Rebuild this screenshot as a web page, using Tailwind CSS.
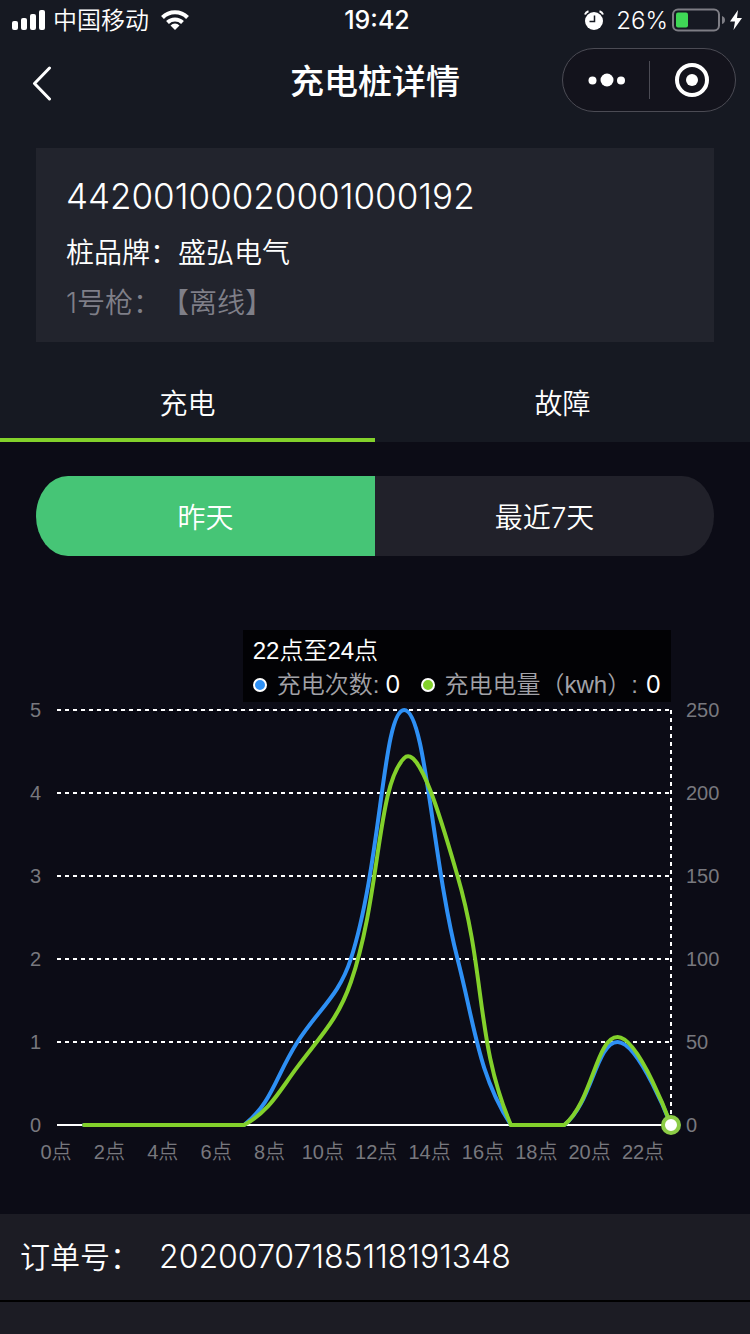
<!DOCTYPE html>
<html lang="zh-CN">
<head>
  <meta charset="UTF-8" />
  <meta name="viewport" content="width=device-width, initial-scale=1.0" />
  <title>充电桩详情</title>
  <script src="https://cdn.jsdelivr.net/npm/@tailwindcss/browser@4"></script>
</head>
<body class="min-h-screen flex flex-col bg-[#0c0c16] text-white font-[350] font-['Inter','Noto_Sans_CJK_SC',sans-serif]">
  <header class="bg-[#161922]">
    <!-- status bar -->
    <div class="grid grid-cols-3 items-center h-10 pl-3 pr-2 text-2xl">
      <div class="flex items-center gap-2">
        <svg class="w-[33px] h-5" viewBox="0 0 33 20" fill="#fff">
          <rect x="0" y="11" width="6" height="9" rx="2" />
          <rect x="9" y="8" width="6" height="12" rx="2" />
          <rect x="18" y="4" width="6" height="16" rx="2" />
          <rect x="27" y="0" width="6" height="20" rx="2" />
        </svg>
        <span class="pt-0.5">中国移动</span>
        <svg class="w-7 h-5 ml-1" viewBox="0 0 28 20" fill="none" stroke="#fff" stroke-width="4">
          <path d="M1.500 7.500a17.500 17.500 0 0 1 25 0" />
          <path d="M6.500 12.500a10.700 10.700 0 0 1 15 0" />
          <path d="M14 20l-4.500-4.600a6.500 6.500 0 0 1 9 0z" fill="#fff" stroke="none" />
        </svg>
      </div>
      <div class="pt-0.5 text-center text-[25px] font-medium">19:42</div>
      <div class="flex items-center justify-end">
        <svg class="w-5 h-5 mr-3" viewBox="0 0 20 20">
          <circle cx="10" cy="11" r="9" fill="#fff" />
          <path d="M1 4.500a5 5 0 0 1 3.500-3.300M19 4.500a5 5 0 0 0-3.500-3.300" fill="none" stroke="#fff" stroke-width="2" />
          <path d="M10.500 5.500v6h-5" fill="none" stroke="#161922" stroke-width="1.500" />
        </svg>
        <span class="pt-0.5">26%</span>
        <svg class="w-[54px] h-6 ml-1" viewBox="0 0 54 24">
          <rect x="1" y="1.500" width="46" height="21" rx="5" fill="none" stroke="#7d7d84" stroke-width="2" />
          <rect x="4" y="4.500" width="12" height="15" rx="2" fill="#3fd856" />
          <path d="M50 8q3 1 3 4t-3 4z" fill="#7d7d84" />
        </svg>
        <svg class="w-3 h-5 ml-1" viewBox="0 0 12 20" fill="#fff">
          <path d="M8 0L0 11.500h5L3.500 20 12 8H7z" />
        </svg>
      </div>
    </div>

    <!-- navigation bar -->
    <div class="grid grid-cols-[174px_1fr_174px] items-start px-3.5 pt-2 h-[108px]">
      <button class="w-14 h-16 pt-2 flex items-center justify-center" aria-label="返回">
        <svg class="w-5 h-9" viewBox="0 0 20 36" fill="none" stroke="#fff" stroke-width="3" stroke-linecap="round" stroke-linejoin="round">
          <path d="M17.500 2L2.500 17.500 17.500 33" />
        </svg>
      </button>
      <h1 class="pt-0.5 text-center text-[34px] leading-16 font-medium">充电桩详情</h1>
      <div class="flex items-center h-16 rounded-full border border-[#4b4b54] bg-[#13131c]">
        <button class="flex-1 flex justify-center" aria-label="更多">
          <svg class="w-[38px] h-4" viewBox="0 0 38 16" fill="#fff">
            <circle cx="5.500" cy="8.500" r="4" />
            <circle cx="20" cy="8" r="6.500" />
            <circle cx="34" cy="8.500" r="4" />
          </svg>
        </button>
        <span class="w-px h-[38px] bg-[#4b4b54]"></span>
        <button class="flex-1 flex justify-center" aria-label="关闭">
          <svg class="w-9 h-9" viewBox="0 0 36 36">
            <circle cx="18" cy="18" r="15" fill="none" stroke="#fff" stroke-width="4" />
            <circle cx="18" cy="18" r="6" fill="#fff" />
          </svg>
        </button>
      </div>
    </div>

    <!-- pile info -->
    <section class="mx-9 px-[30px] pt-6 pb-3.5 bg-[#22242d] text-[28px] leading-[50px] [text-spacing-trim:space-all]">
      <p class="text-[35px] leading-12 mb-2">44200100020001000192</p>
      <p>桩品牌：盛弘电气</p>
      <p class="text-[#7f7f88]">1号枪：【离线】</p>
    </section>

    <nav class="grid grid-cols-2 mt-5 text-[28px] text-center leading-[68px]">
      <a href="#" class="pt-2 border-b-4 border-[#83d12b]">充电</a>
      <a href="#" class="pt-2 border-b-4 border-transparent">故障</a>
    </nav>
  </header>

  <main>
    <div class="grid grid-cols-2 mx-9 mt-[34px] h-20 text-[28px] rounded-[32px/40px] overflow-hidden">
      <button class="pt-1 bg-[#46c576]">昨天</button>
      <button class="pt-1 bg-[#21212a]">最近7天</button>
    </div>

    <section class="relative mt-[74px] mb-[34px]">
      <svg id="chart" class="block w-full h-auto" viewBox="0 630 750 550" font-size="20" font-weight="350" fill="#78787e" font-family="'Liberation Sans','Noto Sans CJK SC',sans-serif"></svg>
      <!-- tooltip of the selected point -->
      <div class="absolute top-0 right-[79px] h-[72px] px-2.5 pt-1 bg-[#020205] text-2xl leading-[34px] whitespace-nowrap font-['Liberation_Sans','Noto_Sans_CJK_SC',sans-serif]">
        <p>22点至24点</p>
        <div class="flex items-center text-[#a2a2a8]">
          <i class="size-3.5 rounded-full border-2 border-white bg-[#2e90f5]"></i>
          <span class="ml-2.5">充电次数:</span><span class="ml-1.5 text-white font-normal font-['Inter']">0</span>
          <i class="size-3.5 ml-5 rounded-full border-2 border-white bg-[#83d12b]"></i>
          <span class="ml-2.5">充电电量（kwh）:</span><span class="ml-2 text-white font-normal font-['Inter']">0</span>
        </div>
      </div>
    </section>
  </main>

  <section class="grow bg-[#1c1c24]">
    <div class="flex items-center h-[88px] px-5 border-b-2 border-black text-[30px]">
      <span class="w-[139px]">订单号：</span>
      <span class="text-[32px]">20200707185118191348</span>
    </div>
  </section>

  <script>
    const left = 57, right = 671, top0 = 710, bottom = 1125;
    const first = 84, step = (right - first) / 11;
    const times = [0, 0, 0, 0, 1, 2, 5, 2, 0, 0, 1, 0];
    const kwh = [0, 0, 0, 0, 35, 86, 221, 150, 0, 0, 53, 0];

    const svgNS = "http://www.w3.org/2000/svg";
    const chart = document.getElementById("chart");

    function add(tag, attrs, text) {
      const el = document.createElementNS(svgNS, tag);
      for (const k in attrs) el.setAttribute(k, attrs[k]);
      if (text !== undefined) el.textContent = text;
      chart.appendChild(el);
    }

    // smooth line, control points stay inside the plot area
    function smoothPath(values, max) {
      const pts = values.map((v, i) => [first + i * step, bottom - v / max * (bottom - top0)]);
      const clamp = y => Math.min(bottom, Math.max(top0, y));
      const cps = pts.map((p, i) => {
        if (i === 0 || i === pts.length - 1) return [p, p];
        const a = pts[i - 1], b = pts[i + 1];
        const d0 = Math.hypot(p[0] - a[0], p[1] - a[1]);
        const d1 = Math.hypot(b[0] - p[0], b[1] - p[1]);
        const vx = (b[0] - a[0]) * 0.4, vy = (b[1] - a[1]) * 0.4;
        const r0 = d0 / (d0 + d1), r1 = d1 / (d0 + d1);
        return [
          [p[0] - vx * r0, clamp(p[1] - vy * r0)],
          [p[0] + vx * r1, clamp(p[1] + vy * r1)]
        ];
      });
      let d = "M" + pts[0];
      for (let i = 1; i < pts.length; i++) {
        d += "C" + cps[i - 1][1] + " " + cps[i][0] + " " + pts[i];
      }
      return d;
    }

    for (let i = 0; i <= 5; i++) {
      const y = bottom - i * 83;
      add("line", { x1: left, x2: right, y1: y, y2: y, stroke: "#fff", "stroke-width": 2, "stroke-dasharray": i ? "4 4" : "none" });
      add("text", { x: 41, y: y + 7, "text-anchor": "end" }, i);
      add("text", { x: 686, y: y + 7 }, i * 50);
    }
    for (let i = 0; i < 12; i++) {
      add("text", { x: 56 + i * step, y: 1159, "text-anchor": "middle" }, i * 2 + "点");
    }

    add("line", { x1: right, x2: right, y1: top0, y2: bottom, stroke: "#fff", "stroke-width": 2, "stroke-dasharray": "4 4" });
    add("path", { d: smoothPath(times, 5), fill: "none", stroke: "#2e90f5", "stroke-width": 4, "stroke-linecap": "round" });
    add("path", { d: smoothPath(kwh, 250), fill: "none", stroke: "#83d12b", "stroke-width": 4, "stroke-linecap": "round" });
    add("circle", { cx: right, cy: bottom, r: 8, fill: "#fff", stroke: "#8ccc46", "stroke-width": 4 });
  </script>
</body>
</html>
